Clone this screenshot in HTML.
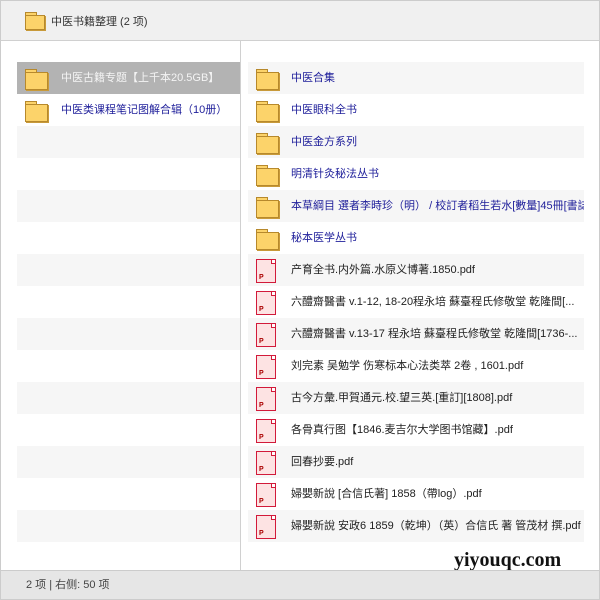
<!DOCTYPE html>
<html><head><meta charset="utf-8"><style>
*{margin:0;padding:0;box-sizing:border-box}
body{width:600px;height:600px;overflow:hidden;background:#fff;font-family:"Liberation Sans","Noto Sans CJK SC",sans-serif;font-size:11px;position:relative}
.frame{position:absolute;left:0;top:0;width:600px;height:600px;border:1px solid #ccc}
.hdr{position:absolute;left:0;top:0;width:600px;height:41px;background:#f0f0f0;border:1px solid #ccc;border-bottom:1px solid #d0d0d0}
.ftr{position:absolute;left:0;top:570px;width:600px;height:30px;background:#e6e6e6;border:1px solid #ccc;color:#444;font-size:11px;line-height:28px;padding-left:25px}
.div{position:absolute;left:240px;top:41px;width:1px;height:529px;background:#d0d0d0}
.row{position:absolute;height:32px;line-height:32px;white-space:nowrap;overflow:hidden;color:#222}
.g{background:#f6f6f6}
.sel{background:#b3b3b3;color:#f4f4f4}
.fd{position:absolute;width:22px;height:20px;top:7px}
.fd:before{content:"";position:absolute;left:0;top:0;width:10px;height:4px;background:#fcd36a;border:1px solid #b7892c;border-bottom:none}
.fd:after{content:"";position:absolute;left:0;top:3px;width:21px;height:16px;background:#fcd36a;border:1px solid #b7892c;box-shadow:1px 1px 0 #c89a3a}
.fs{width:18px;height:16px}
.fs:after{width:18px;height:13px}
.pdf{position:absolute;width:20px;height:24px;top:5px;background:#fde3e3;border:1.5px solid #d21a3a}
.pdf b{position:absolute;left:2px;bottom:1px;font-size:7px;line-height:7px;color:#a00;font-weight:bold}
.pdf i{position:absolute;right:0;top:0;width:4px;height:4px;border-left:1px solid #d21a3a;border-bottom:1px solid #d21a3a;background:#fff}
.b{color:#1e1e9a}
.wm{position:absolute;left:454px;top:549px;font-family:"Liberation Serif",serif;font-weight:bold;font-size:20px;color:#111}
</style></head><body>
<div class="frame"></div>
<div class="hdr"><div class="fd fs" style="left:24px;top:11px"></div><span style="position:absolute;left:50px;top:12px;font-size:11px;color:#333">中医书籍整理 (2 项)</span></div>
<div class="div"></div>

<div class="row sel" style="left:17px;top:62px;width:223px"><div class="fd" style="left:8px"></div><span style="position:absolute;left:44px">中医古籍专题【上千本20.5GB】</span></div>
<div class="row" style="left:17px;top:94px;width:223px"><div class="fd" style="left:8px"></div><span class="b" style="position:absolute;left:44px">中医类课程笔记图解合辑（10册）</span></div>
<div class="row g" style="left:17px;top:126px;width:223px"></div>
<div class="row g" style="left:17px;top:190px;width:223px"></div>
<div class="row g" style="left:17px;top:254px;width:223px"></div>
<div class="row g" style="left:17px;top:318px;width:223px"></div>
<div class="row g" style="left:17px;top:382px;width:223px"></div>
<div class="row g" style="left:17px;top:446px;width:223px"></div>
<div class="row g" style="left:17px;top:510px;width:223px"></div>

<div class="row g" style="left:248px;top:62px;width:336px"><div class="fd" style="left:8px"></div><span class="b" style="position:absolute;left:43px">中医合集</span></div>
<div class="row" style="left:248px;top:94px;width:336px"><div class="fd" style="left:8px"></div><span class="b" style="position:absolute;left:43px">中医眼科全书</span></div>
<div class="row g" style="left:248px;top:126px;width:336px"><div class="fd" style="left:8px"></div><span class="b" style="position:absolute;left:43px">中医金方系列</span></div>
<div class="row" style="left:248px;top:158px;width:336px"><div class="fd" style="left:8px"></div><span class="b" style="position:absolute;left:43px">明清针灸秘法丛书</span></div>
<div class="row g" style="left:248px;top:190px;width:336px"><div class="fd" style="left:8px"></div><span class="b" style="position:absolute;left:43px">本草綱目 選者李時珍（明） / 校訂者稻生若水[數量]45冊[書誌事項</span></div>
<div class="row" style="left:248px;top:222px;width:336px"><div class="fd" style="left:8px"></div><span class="b" style="position:absolute;left:43px">秘本医学丛书</span></div>
<div class="row g" style="left:248px;top:254px;width:336px"><div class="pdf" style="left:8px"><i></i><b>P</b></div><span style="position:absolute;left:43px">产育全书.内外篇.水原义博著.1850.pdf</span></div>
<div class="row" style="left:248px;top:286px;width:336px"><div class="pdf" style="left:8px"><i></i><b>P</b></div><span style="position:absolute;left:43px">六醴齋醫書 v.1-12, 18-20程永培 蘇臺程氏修敬堂 乾隆間[...</span></div>
<div class="row g" style="left:248px;top:318px;width:336px"><div class="pdf" style="left:8px"><i></i><b>P</b></div><span style="position:absolute;left:43px">六醴齋醫書 v.13-17 程永培 蘇臺程氏修敬堂 乾隆間[1736-...</span></div>
<div class="row" style="left:248px;top:350px;width:336px"><div class="pdf" style="left:8px"><i></i><b>P</b></div><span style="position:absolute;left:43px">刘完素 吴勉学 伤寒标本心法类萃 2卷 , 1601.pdf</span></div>
<div class="row g" style="left:248px;top:382px;width:336px"><div class="pdf" style="left:8px"><i></i><b>P</b></div><span style="position:absolute;left:43px">古今方彙.甲賀通元.校.望三英.[重訂][1808].pdf</span></div>
<div class="row" style="left:248px;top:414px;width:336px"><div class="pdf" style="left:8px"><i></i><b>P</b></div><span style="position:absolute;left:43px">各骨真行图【1846.麦吉尔大学图书馆藏】.pdf</span></div>
<div class="row g" style="left:248px;top:446px;width:336px"><div class="pdf" style="left:8px"><i></i><b>P</b></div><span style="position:absolute;left:43px">回春抄要.pdf</span></div>
<div class="row" style="left:248px;top:478px;width:336px"><div class="pdf" style="left:8px"><i></i><b>P</b></div><span style="position:absolute;left:43px">婦嬰新說 [合信氏著] 1858（帶log）.pdf</span></div>
<div class="row g" style="left:248px;top:510px;width:336px"><div class="pdf" style="left:8px"><i></i><b>P</b></div><span style="position:absolute;left:43px">婦嬰新說 安政6 1859（乾坤）（英）合信氏 著 管茂材 撰.pdf</span></div>

<div class="wm">yiyouqc.com</div>
<div class="ftr">2 项 | 右侧: 50 项</div>
</body></html>
